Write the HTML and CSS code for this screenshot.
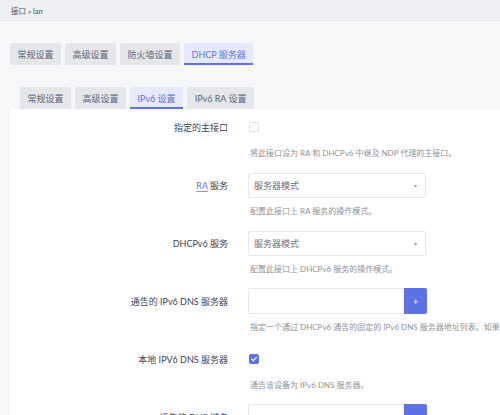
FILE: index.html
```html
<!DOCTYPE html>
<html>
<head>
  <title>接口 - lan</title>
  <link rel="stylesheet" href="styles.css">
</head>
<body>
  <header class="topbar">
    <span class="breadcrumb">接口 » lan</span>
  </header>

  <ul class="tabs main-tabs">
    <li class="tab">常规设置</li>
    <li class="tab">高级设置</li>
    <li class="tab">防火墙设置</li>
    <li class="tab active">DHCP 服务器</li>
  </ul>

  <ul class="tabs sub-tabs">
    <li class="tab">常规设置</li>
    <li class="tab">高级设置</li>
    <li class="tab active">IPv6 设置</li>
    <li class="tab">IPv6 RA 设置</li>
  </ul>

  <div class="panel">
    <div class="section">
      <div class="row">
        <label class="label">指定的主接口</label>
        <div class="field">
          <span class="checkbox"></span>
        </div>
      </div>
      <div class="desc">将此接口设为 RA 和 DHCPv6 中继及 NDP 代理的主接口。</div>
    </div>

    <div class="section">
      <div class="row">
        <label class="label"><abbr class="abbr">RA</abbr> 服务</label>
        <div class="field">
          <div class="select">服务器模式<span class="caret">▾</span></div>
        </div>
      </div>
      <div class="desc">配置此接口上 RA 服务的操作模式。</div>
    </div>

    <div class="section">
      <div class="row">
        <label class="label">DHCPv6 服务</label>
        <div class="field">
          <div class="select">服务器模式<span class="caret">▾</span></div>
        </div>
      </div>
      <div class="desc">配置此接口上 DHCPv6 服务的操作模式。</div>
    </div>

    <div class="section">
      <div class="row">
        <label class="label">通告的 IPv6 DNS 服务器</label>
        <div class="field">
          <div class="input-group">
            <span class="input"></span>
            <span class="add-btn">+</span>
          </div>
        </div>
      </div>
      <div class="desc">指定一个通过 DHCPv6 通告的固定的 IPv6 DNS 服务器地址列表。如果</div>
    </div>

    <div class="section">
      <div class="row">
        <label class="label">本地 IPV6 DNS 服务器</label>
        <div class="field">
          <span class="checkbox checked">
            <svg viewBox="0 0 10 10" width="8" height="8"><path d="M2.2 5.2 L4.2 7.1 L7.9 3" fill="none" stroke="#fff" stroke-width="1.5" stroke-linecap="round" stroke-linejoin="round"/></svg>
          </span>
        </div>
      </div>
      <div class="desc">通告该设备为 IPv6 DNS 服务器。</div>
    </div>

    <div class="section">
      <div class="row">
        <label class="label">通告的 DNS 域名</label>
        <div class="field">
          <div class="input-group">
            <span class="input"></span>
            <span class="add-btn">+</span>
          </div>
        </div>
      </div>
    </div>
  </div>
</body>
</html>
```

FILE: styles.css
```css
body {
  margin: 0;
  padding: 0;
  background-color: #f6f7f9;
  font-family: Lato, "Noto Sans CJK SC", sans-serif;
  color: #32325d;
  overflow: hidden;
}

.topbar {
  height: 20px;
  background-color: #eeeff3;
  border-bottom: 1px solid #e6e7eb;
  display: flex;
  align-items: center;
  padding-left: 11px;
}

.breadcrumb {
  font-size: 7.5px;
  color: #4a4f66;
}

.tabs {
  list-style-type: none;
  display: flex;
  gap: 4px;
  margin: 0;
  padding: 0;
}

.main-tabs {
  margin-top: 22px;
  padding-left: 10px;
}

.sub-tabs {
  margin-top: 22px;
  padding-left: 20px;
}

.tab {
  height: 22px;
  padding: 0 7.5px;
  display: flex;
  align-items: center;
  font-size: 9px;
  color: #5c6378;
  background-color: #e4e6ea;
  border-radius: 2px 2px 0 0;
  box-sizing: border-box;
}

.tab.active {
  color: #5e72e4;
  background-color: #e6e9fb;
  border-bottom: 2px solid #5e72e4;
  padding-top: 2px;
}

.panel {
  margin-left: 8px;
  padding-top: 5px;
  background-color: #fff;
  border-left: 1px solid #eceef1;
  height: 320px;
}

.section {
  margin-bottom: 12px;
}

.row {
  display: flex;
  align-items: center;
  height: 26px;
}

.label {
  width: 219px;
  text-align: right;
  font-size: 9px;
  color: #3a3f55;
}

.abbr {
  color: #5e72e4;
  text-decoration: none;
  border-bottom: 1px solid #8a98ea;
}

.field {
  margin-left: 20px;
  display: flex;
  align-items: center;
}

.checkbox {
  width: 10px;
  height: 10px;
  margin-left: 1px;
  border: 1px solid #dfe1e6;
  border-radius: 2px;
  box-sizing: border-box;
  display: flex;
  align-items: center;
  justify-content: center;
}

.checkbox.checked {
  background-color: #5e72e4;
  border-color: #5e72e4;
}

.select {
  width: 178px;
  height: 25px;
  border: 1px solid #e6e7ea;
  border-radius: 2px;
  box-sizing: border-box;
  padding-left: 5px;
  display: flex;
  align-items: center;
  font-size: 9px;
  color: #6b7080;
  position: relative;
}

.caret {
  position: absolute;
  right: 8px;
  font-size: 6px;
  color: #9aa0a8;
}

.input-group {
  display: flex;
  height: 26px;
}

.input {
  width: 156px;
  border: 1px solid #e6e7ea;
  border-right: none;
  border-radius: 2px 0 0 2px;
  box-sizing: border-box;
}

.add-btn {
  width: 23px;
  background-color: #5e72e4;
  color: #fff;
  font-size: 9px;
  display: flex;
  align-items: center;
  justify-content: center;
  border-radius: 0 2px 2px 0;
}

.desc {
  margin-top: 6px;
  margin-left: 241px;
  height: 14px;
  line-height: 14px;
  font-size: 8px;
  color: #8d919b;
  white-space: nowrap;
}
```
